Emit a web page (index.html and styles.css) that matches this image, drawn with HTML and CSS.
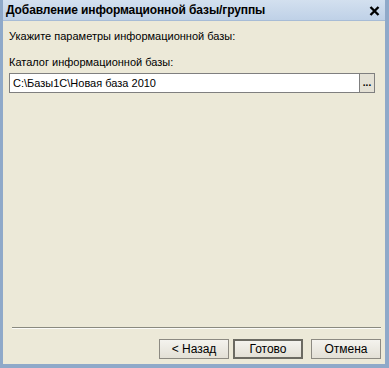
FILE: index.html
```html
<!DOCTYPE html>
<html lang="ru">
<head>
<meta charset="utf-8">
<title>Добавление информационной базы/группы</title>
<link rel="stylesheet" href="styles.css">
</head>
<body>
<div class="window">
  <div class="titlebar">
    <span class="title">Добавление информационной базы/группы</span>
    <svg class="close" width="11" height="10" viewBox="0 0 11 10"><path d="M1.5 1 L9.5 9 M9.5 1 L1.5 9" stroke="#000" stroke-width="2.4" stroke-linecap="butt"/></svg>
  </div>
  <div class="body">
    <div class="content">
      <p class="hint">Укажите параметры информационной базы:</p>
      <label class="label">Каталог информационной базы:</label>
      <div class="field">
        <div class="input">C:\Базы1С\Новая база 2010</div>
        <div class="pick">...</div>
      </div>
    </div>
    <div class="separator"></div>
    <div class="buttons">
      <div class="btn">&lt; Назад</div>
      <div class="btn default">Готово</div>
      <div class="btn cancel">Отмена</div>
    </div>
  </div>
</div>
</body>
</html>
```
FILE: styles.css
```css
* { box-sizing: border-box; }
html, body { margin: 0; padding: 0; }
body {
  width: 389px;
  height: 368px;
  overflow: hidden;
  font-family: "Liberation Sans", Arial, sans-serif;
  font-size: 11px;
  color: #000;
}
.window {
  width: 389px;
  height: 368px;
  display: flex;
  flex-direction: column;
  background: #ece9d8;
  border-left: 3px solid #8fa9c9;
  border-right: 4px solid #8fa9c9;
  border-bottom: 4px solid #8fa9c9;
}
.titlebar {
  height: 21px;
  flex: none;
  display: flex;
  align-items: center;
  justify-content: space-between;
  padding: 0 5px 0 3px;
  background: linear-gradient(#d3e0ef, #bfd1e7);
  border-bottom: 1px solid #a7bcd6;
}
.title {
  font-weight: bold;
  font-size: 12px;
  letter-spacing: -0.1px;
}
.close { display: block; margin-top: 1px; }
.body {
  flex: 1;
  display: flex;
  flex-direction: column;
  padding: 0 4px 5px 6px;
}
.content { flex: 1; }
.hint { margin: 9px 0 0 0; line-height: 13px; }
.label { display: block; margin-top: 13px; line-height: 13px; }
.field {
  display: flex;
  margin-top: 4px;
  height: 20px;
  width: 366px;
}
.input {
  flex: 1;
  background: #fff;
  border: 1px solid #7f7f7f;
  padding: 2px 3px;
  line-height: 15px;
}
.pick {
  width: 15px;
  border: 1px solid #7f7f7f;
  border-left: none;
  background: #e4e1d5;
  font-size: 10px;
  text-align: center;
  line-height: 17px;
  font-weight: bold;
}
.separator {
  height: 2px;
  border-top: 1px solid #8a8a80;
  border-bottom: 1px solid #fbfbf8;
  margin: 0 0 0 3px;
}
.buttons {
  display: flex;
  justify-content: flex-end;
  gap: 4px;
  margin-top: 10px;
}
.btn {
  width: 70px;
  height: 20px;
  border: 1px solid #8c8a82;
  background: linear-gradient(#f4f3ee, #e3e0d6);
  text-align: center;
  line-height: 18px;
  font-size: 12px;
}
.btn.default { border: 2px solid #6b6a62; line-height: 16px; }
.btn.cancel { margin-left: 4px; }
```
